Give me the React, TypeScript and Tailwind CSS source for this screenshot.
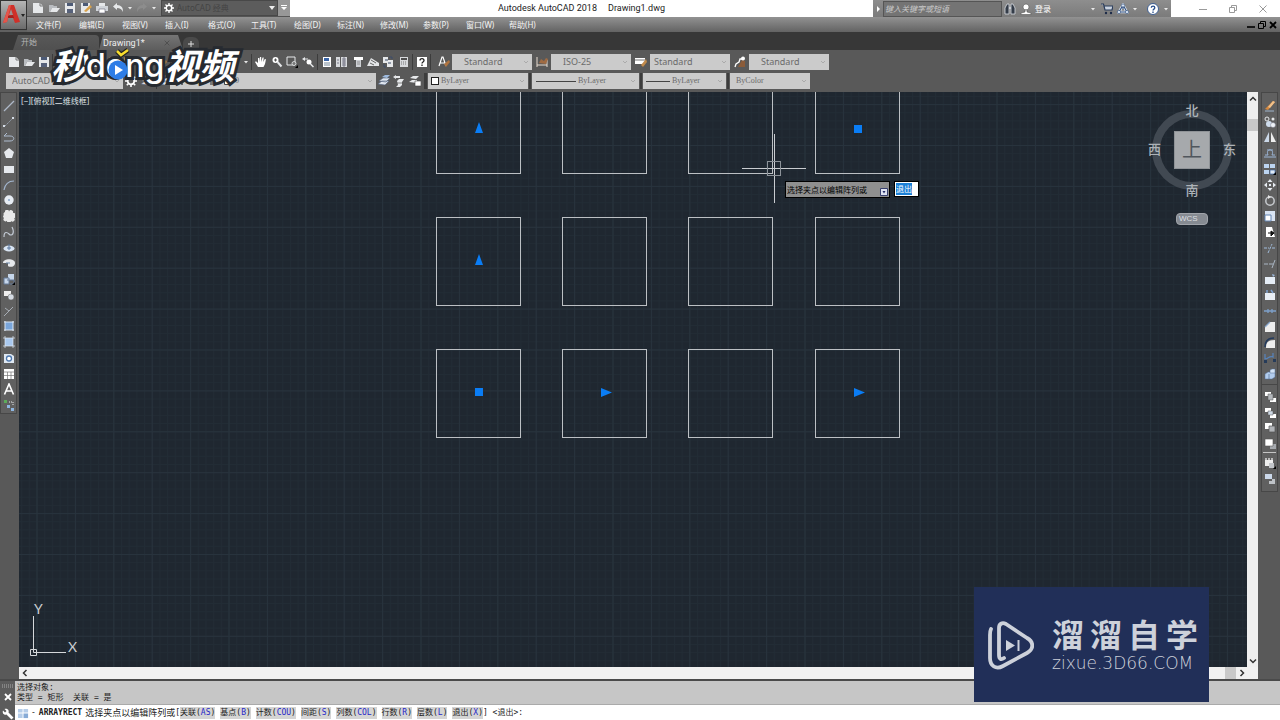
import type { ReactNode } from "react";

const W = "#e6e8ea";
const B = "#a9c8ee";

const glyphs: Record<string, ReactNode> = {
  newFile: <><path d="M1 1h7l3 3v7H1z" fill={W} /><path d="M8 1v3h3" fill="none" stroke="#777" /></>,
  open: <><path d="M1 3h4l1 1h3v2H4l-2 4H1z" fill="#b9bcc0" /><path d="M4 6h8l-3 4H2z" fill={W} /></>,
  save: <><path d="M1 1h10v10H1z" fill={W} /><path d="M3 1h6v3H3z" fill="#4c5a75" /><path d="M3 7h6v4H3z" fill="#56617a" /></>,
  saveAs: <><path d="M1 1h9v10H1z" fill={W} /><path d="M3 1h5v3H3z" fill="#4c5a75" /><path d="M4 9l6-6 2 2-6 5z" fill="#d9a24a" /></>,
  print: <><path d="M3 1h6v3H3z" fill={W} /><path d="M0 4h12v5H0z" fill="#d0d4d9" /><path d="M3 7h6v4H3z" fill="#fff" stroke="#667" strokeWidth=".6" /></>,
  undo: <path d="M5 1L1 4.500L5 8V6c3 0 5 1 5.500 4C12 6 9 3 5 3z" fill={W} />,
  redo: <path d="M7 1l4 3.500L7 8V6C4 6 2 7 1.500 10 0 6 3 3 7 3z" fill="#8d8d8d" />,
  gear: <><circle cx="6" cy="6" r="3.300" fill="none" stroke="#fff" strokeWidth="1.800" /><path d="M6 0v2.500M6 9.500V12M0 6h2.500M9.500 6H12M1.800 1.800l1.700 1.700M8.500 8.500l1.700 1.700M10.200 1.800L8.500 3.500M3.500 8.500l-1.700 1.700" stroke="#fff" strokeWidth="1.600" /></>,
  cut: <path d="M3 1l5 8M9 1L4 9M3 11a1.500 1.500 0 1 0 0-2.900M9 11a1.500 1.500 0 1 1 0-2.900" stroke={W} fill="none" strokeWidth="1.200" />,
  copy: <><path d="M1 1h6v7H1z" fill={W} stroke="#555" strokeWidth=".5" /><path d="M5 4h6v7H5z" fill={W} stroke="#555" strokeWidth=".8" /></>,
  hand: <path d="M3 11L0 6l1-.7L3 7V2h1.200v4L5 1h1.200v5L7.500 1.500h1.200L8.300 6l1.500-3 1.200.3L10 8l-1.500 3z" fill="#fff" />,
  zoomPm: <><circle cx="4.500" cy="4" r="3" fill="#fff" /><path d="M6.500 6l4 4.500" stroke={W} strokeWidth="2" /><path d="M3 4h3M4.500 2.500v3" stroke="#555" /></>,
  zoomWin: <><path d="M1 1h8v8H1z" fill="none" stroke={W} /><circle cx="8" cy="7.500" r="2" fill="#777" stroke={W} strokeWidth=".8" /><path d="M12 9v3H9z" fill="#000" /></>,
  zoomPrev: <><path d="M0 3l3-2v1.500h3v1H3V5z" fill={W} /><circle cx="7" cy="6" r="2.500" fill="#fff" /><path d="M8.500 8l3 3" stroke={W} strokeWidth="1.500" /></>,
  props: <><path d="M2 1h8v10H2z" fill="#fff" /><path d="M3 2h5v3H3z" fill="#3a65a8" /><path d="M3 7h6M3 9h6" stroke="#789" /></>,
  design: <><path d="M0 1h4v10H0zM5 1h6v10H5z" fill="#d8dadd" /><path d="M6 3h4M6 5h4M6 7h4M6 9h4M1 4h2M1 7h2M8 1v10" stroke="#667" strokeWidth=".8" /></>,
  palettes: <><path d="M2 1h9v3H2z" fill="#fff" /><path d="M4 4h5v7H4z" fill="#cdd0d4" /><path d="M5 6h3M5 8h3" stroke="#777" strokeWidth=".7" /></>,
  sheet: <><path d="M0 10l4-8 8 5v3z" fill="#e4e6e8" /><path d="M3 7l4 2M4 4l5 3" stroke="#666" /></>,
  markup: <><path d="M1 1h5v3h5v7H5V7H1z" fill={W} /><path d="M7 1h3v2M2 8v3h2M6 7h3M3 4h3" stroke="#3c4d6b" fill="none" /></>,
  calc: <><path d="M2 1h8v10H2z" fill="#d7d9dc" /><path d="M3 2h6v2H3z" fill="#4d4d4d" /><path d="M3 6h6M3 8h6" stroke="#777" strokeDasharray="1 1" /></>,
  help: <><path d="M1 1h10v10H1z" fill="#fff" /><path d="M4 4.500c0-2.500 4-2.500 4 0 0 1.500-2 1.500-2 3M6 8.500V10" stroke="#222" strokeWidth="1.300" fill="none" /></>,
  textStyle: <><path d="M1 10L4 1h1l3 9M2.500 7h4" stroke="#fff" fill="none" strokeWidth="1.200" /><path d="M6 8l5-4 1 2-4 5z" fill="#b07440" /></>,
  dimStyle: <><path d="M1 1v10M11 4v7M1 9h10" stroke="#e8dcd0" /><path d="M3 7l2-4 3 2 2-3 2 1-2 5z" fill="#a06b42" /></>,
  tableStyle: <><path d="M0 2h10v6H0z" fill="#fff" /><path d="M0 4h10" stroke="#777" /><path d="M6 9l5-6 1 3-4 5z" fill="#c18a4b" /></>,
  leaderStyle: <><path d="M4 11l4-7 3 1v6z" fill="#8b5c3a" /><path d="M1 11l1-3 3-2 1-3h2" stroke="#fff" fill="none" strokeWidth="1.300" /><circle cx="9" cy="2.500" r="2" fill="#fff" /></>,
  layers: <><path d="M0 9l4-3h7l-4 4zM1 6l4-3h7l-4 4z" fill="#dfe5ee" stroke="#51627d" strokeWidth=".6" /><path d="M4 2l3-2h5l-3 3z" fill="#9db9dd" /></>,
  layerPrev: <><path d="M0 2l3-2v1h4v2H3v1z" fill={W} /><path d="M4 6l2-2h5l-2 3v3l-2 2H3l2-2z" fill={W} /><path d="M4 8h5" stroke="#555" strokeWidth=".7" /></>,
  layerState: <><path d="M1 3l3-2h6L7 4zM0 7l3-2h5v3z" fill={W} /><path d="M6 6h6v5H6z" fill="#fff" stroke="#444" strokeWidth=".6" /></>,
  line: <path d="M1 11L11 1" stroke="#aeb9c9" strokeWidth="1.200" />,
  xline: <><path d="M2 10L10 2" stroke="#99a3b0" strokeDasharray="2 1" /><path d="M0 9h2v2H0zM9 1h2v2H9z" fill="#d5dbe4" /></>,
  pline: <path d="M1 10h6c5 0 5-5 0-5H1l3-3" stroke="#aebccf" fill="none" />,
  polygon: <path d="M6 1l5 4-2 6H3L1 5z" fill="#e6e9ed" />,
  rectangle: <path d="M1 3h10v7H1z" fill="#e6e9ed" />,
  arc: <path d="M1 11C2 5 5 2 11 2" stroke="#a3b6cf" fill="none" strokeWidth="1.200" />,
  circle: <><circle cx="6" cy="6" r="4.700" fill="#e8edf4" /><circle cx="6" cy="6" r="1" fill="#8aa6ca" /></>,
  cloud: <path d="M2 2a2 2 0 0 1 4-.5A2 2 0 0 1 10 3a2 2 0 0 1 1 5 2 2 0 0 1-3 3 2 2 0 0 1-4-.3A2 2 0 0 1 1 8a2 2 0 0 1-.2-3A2 2 0 0 1 2 2z" fill="#e9e9e9" />,
  spline: <path d="M1 11c0-7 4-4 5-3 3 3 6-1 3-7" stroke="#c4cbd5" fill="none" strokeWidth="1.200" />,
  ellipse: <><ellipse cx="6" cy="6.500" rx="5.500" ry="3" fill="#d9e5f3" /><path d="M6 2v6M4 6h4" stroke="#58779f" /></>,
  ellipseArc: <><path d="M0 6c0-5 12-5 12 0s-7 4-7 3V6z" fill="#e7e9ec" /><path d="M3 6h4" stroke="#6885a8" /></>,
  insert: <><path d="M1 5h5v6H1zM5 1h6v6H5z" fill="#c6d6ea" /><path d="M1 5h5v6H1zM4 7h7v4H7" fill="none" stroke="#647b99" /><path d="M12 9v3H9z" fill="#000" /></>,
  block: <><path d="M1 2h7v5H1z" fill="#eee" /><circle cx="8" cy="8" r="3" fill="#d4dae2" stroke="#666" strokeWidth=".5" /></>,
  point: <path d="M1 11L10 2M2 3l4 3" stroke="#a7adb5" />,
  region: <><path d="M2 2h8v8H2z" fill={B} /><path d="M0 2h12M0 10h12M2 0v12M10 0v12" stroke="#dfe9f5" strokeWidth=".7" /></>,
  hatch: <><path d="M2 2h8v8H2z" fill="#79a5da" /><path d="M1 2h10M1 10h10M2 1v10M10 1v10" stroke="#dbe6f3" /></>,
  wipe: <><path d="M1 2h7l3 2v7H1z" fill="#dfe8f2" /><circle cx="6" cy="6.500" r="2.500" fill="#fff" stroke="#4e78ae" strokeWidth="1.300" /></>,
  table: <><path d="M1 1h10v10H1z" fill="#fff" /><path d="M1 4h10M1 7.500h10M4.500 4v7M8 4v7" stroke="#777" strokeWidth=".7" /></>,
  mtext: <path d="M1.500 11.500L6 1l4.500 10.500M3 8h6" stroke="#fff" fill="none" strokeWidth="1.600" />,
  points: <><path d="M1 1h3v3H1z" fill="#5cab5a" /><path d="M6 3h4v3" stroke={W} fill="none" strokeDasharray="1 1" /><path d="M4 6h3v3H4zM8 9h3v3H8z" fill="#8eb6e2" /></>,
  erase: <><path d="M1 9l8-8 2 1-7 8z" fill="#d6883e" /><path d="M9 1l2 1-5 6-2-1z" fill="#f1c18a" /><path d="M1 11h9" stroke="#9db3cb" /></>,
  copyObj: <><circle cx="3" cy="3" r="2" fill="none" stroke={W} /><circle cx="9" cy="3" r="1.500" fill={W} /><circle cx="5" cy="8" r="3" fill="#cfdcec" /><circle cx="9" cy="9" r="2.500" fill="#eef2f7" stroke="#667" strokeWidth=".4" /></>,
  mirror: <><path d="M5 1v10H0z" fill="#cbd8e8" /><path d="M7 1v10h5z" fill="#eee" /></>,
  offset: <path d="M0 10h12M1 8h3c-3-7 7-7 4 0h3M3 3h6" stroke="#9bb5d6" fill="none" />,
  array: <><path d="M0 1h5v4H0zM6 1h5v4H6zM0 7h5v4H0z" fill="#bcd4f0" /><path d="M6 7h5v4H6z" fill="#dfeaf6" stroke="#3b66a0" strokeWidth=".7" /><path d="M12 9v3H9z" fill="#000" /></>,
  move: <path d="M6 0l2.500 3h-5zM6 12l2.500-3h-5zM0 6l3-2.500v5zM12 6L9 3.500v5zM5 5h2v2H5z" fill="#e6ebf1" />,
  rotate: <><circle cx="6" cy="6" r="4.200" fill="none" stroke="#c6c9cd" strokeWidth="1.500" /><path d="M4 0l3 2-3 2z" fill="#e5e5e5" /></>,
  scale: <><path d="M1 1h10v10H1z" fill="#d8e3f2" /><path d="M1 5h6v6H1z" fill="#fff" stroke="#6384b2" /></>,
  stretch: <><path d="M2 1h6l3 10H2z" fill="#fff" /><path d="M4 7h4M7 5l3 2-3 3z" stroke="#111" fill="#111" /></>,
  trim: <path d="M0 6h5M8 6h4M4 11l4-9" stroke="#9fbad9" strokeDasharray="3 1" />,
  extend: <path d="M0 6h4M5 6h4M8 10l3-8" stroke="#a9b5c3" />,
  breakAt: <><path d="M1 4h10v7H1z" fill="#e5edf6" /><path d="M8 1l3 1-2 2z" fill="#9bb8dc" /></>,
  breakObj: <><path d="M1 4h10v7H1z" fill="#e8eef5" /><path d="M3 1v3M7 1l2 3" stroke="#7fa3d0" strokeWidth="1.500" /></>,
  join: <path d="M0 6h12M4 4v4M8 4v4" stroke="#7da0ca" strokeWidth="1.300" />,
  chamfer: <><path d="M1 11V6l5-5h5v10z" fill="#eee" /><path d="M1 6l5-5" stroke="#8aa9cf" strokeWidth="1.300" /></>,
  fillet: <><path d="M2 11c0-6 2-8 9-8v8z" fill="#eee" /><path d="M1 10C1 4 4 1 10 1" stroke="#233a5c" fill="none" strokeWidth="1.500" /></>,
  blend: <><path d="M1 2v5c4 0 4-4 8-2V1" stroke="#5784bd" fill="none" strokeWidth="1.200" /><path d="M0 8h3v3H0zM9 7h3v3H9z" fill="#263b59" /></>,
  explode: <><path d="M1 6l3-2h7v5l-3 2H1z" fill="#b2cced" stroke="#526f95" strokeWidth=".5" /><path d="M6 2l2-1h3v4H6z" fill="#d2e2f5" stroke="#526f95" strokeWidth=".5" /><path d="M5 6v5" stroke="#526f95" strokeWidth=".7" /></>,
  order1: <><path d="M1 1h6v4H1zM6 7h6v4H6z" fill="#fff" /><path d="M4 3h5v6H4z" fill="#b3b6ba" stroke="#555" strokeWidth=".5" /></>,
  order2: <><path d="M1 1h6v4H1zM6 7h6v4H6z" fill="#fff" /><path d="M4 4h5v4H4z" fill="#cdd7e3" stroke="#555" strokeWidth=".5" /></>,
  order3: <><path d="M1 1h7v6H1z" fill="#fff" /><path d="M5 4h6v6H5z" fill="#b0b3b7" stroke="#555" strokeWidth=".7" /></>,
  order4: <><path d="M6 6h6v5H6z" fill="#a5a9ae" /><path d="M1 1h8v7H1z" fill="#fff" stroke="#555" strokeWidth=".6" /></>,
  order5: <><path d="M1 3h8v6H1z" fill="#eee" /><path d="M2 1v3M5 1v3M8 1v3" stroke="#eee" strokeWidth="1.300" /><path d="M5 6h5v5H5z" fill="#c2c5c9" /><path d="M12 9v3H9z" fill="#000" /></>,
  order6: <><path d="M1 1h7v5H1z" fill="#cbd8ea" /><path d="M8 6h3v5H5V8h3z" fill="#bec2c7" /></>,
  binoculars: <><path d="M1 11V5l2-4h2v10zM7 11V1h2l2 4v6z" fill="#343c48" stroke="#d8dce2" strokeWidth=".8" /><path d="M5 5h2" stroke="#d8dce2" strokeWidth="1.500" /></>,
  user: <><circle cx="6" cy="4" r="3" fill="#fff" stroke="#555" strokeWidth=".6" /><path d="M5 7h2v2l4 1v1.500H1V10l4-1z" fill="#fff" stroke="#555" strokeWidth=".6" /></>,
  cart: <><path d="M0 1h2.500l1.500 6h7l1-4H3" fill="#c9d2df" stroke="#2a3c5b" strokeWidth="1.200" /><circle cx="5" cy="10" r="1.200" fill="#1d2c48" /><circle cx="10" cy="10" r="1.200" fill="#1d2c48" /></>,
  a360: <><path d="M6 2L2 9h8zM6 2v4" fill="none" stroke="#e3ebf6" strokeWidth="2.600" /><path d="M6 2L2 9h8zM6 2v4" fill="none" stroke="#33507e" strokeWidth="1.100" /><circle cx="6" cy="2.500" r="1.600" fill="#dbe6f5" stroke="#33507e" strokeWidth=".6" /><circle cx="2" cy="9" r="1.600" fill="#dbe6f5" stroke="#33507e" strokeWidth=".6" /><circle cx="10" cy="9" r="1.600" fill="#dbe6f5" stroke="#33507e" strokeWidth=".6" /></>,
  round: <><circle cx="6" cy="6" r="5.500" fill="#fff" stroke="#3e5f93" /><path d="M4.300 4.800c0-2.300 3.500-2.300 3.500 0C7.800 6.200 6 6 6 7.500M6 8.500V10" stroke="#264d8c" strokeWidth="1.300" fill="none" /></>,
  min: <path d="M2 6.500h8" stroke="currentColor" />,
  restore: <path d="M2.500 4.500h5v5h-5zM4.500 4.500v-2h5v5h-2" fill="none" stroke="currentColor" />,
  close: <path d="M2.500 2.500l7 7M9.500 2.500l-7 7" stroke="currentColor" fill="none" />,
  cross: <path d="M3 3l6 6M9 3L3 9" stroke="currentColor" strokeWidth="1.800" fill="none" />,
  minBold: <path d="M2 8h8" stroke="currentColor" strokeWidth="1.600" />,
  wrench: <path d="M1 2.500L3 4.500 4.500 3l-2-2C5 0 7.500 2 6.500 4.500l5 5-2 2-5-5C2 7.500 0 5 1 2.500z" fill="#fff" />,
  up: <path d="M3 7.500l3-3 3 3" stroke="#333" strokeWidth="1.500" fill="none" />,
  down: <path d="M3 4.500l3 3 3-3" stroke="#333" strokeWidth="1.500" fill="none" />,
  left: <path d="M7.500 3l-3 3 3 3" stroke="#333" strokeWidth="1.500" fill="none" />,
  right: <path d="M4.500 3l3 3-3 3" stroke="#333" strokeWidth="1.500" fill="none" />,
  chevron: <path d="M4 5l2 2 2-2" stroke="#aaa" fill="none" />,
  caret: <path d="M4 5h4L6 7.500z" fill="#e8e8e8" />,
  arrayCmd: <><path d="M0 1h5v4H0zM6 1h5v4H6zM0 6h5v5H0z" fill="#b5cde9" /><path d="M6 6h5v5H6z" fill="#87abd6" /></>,
};

function Icon({ name, className = "size-3" }: { name: string; className?: string }) {
  return (
    <svg viewBox="0 0 12 12" className={`${className} shrink-0`} aria-hidden="true">
      {glyphs[name]}
    </svg>
  );
}

function Tool({ name, label, className = "w-4" }: { name: string; label: string; className?: string }) {
  return (
    <button type="button" aria-label={label} className={`flex shrink-0 items-center justify-center ${className}`}>
      <Icon name={name} />
    </button>
  );
}

function Combo({ label, value, className, before }: { label: string; value: string; className: string; before?: ReactNode }) {
  return (
    <label className={`flex h-4 shrink-0 items-center bg-[#cbcbcb] text-[#6a6a6a] ${className}`}>
      {before}
      <select aria-label={label} className="min-w-0 flex-1 appearance-none bg-transparent leading-4 outline-none">
        <option>{value}</option>
      </select>
      <Icon name="chevron" />
    </label>
  );
}

const Sep = () => <span className="mx-px h-4 w-px shrink-0 bg-[#3c3c3c]" />;

const menus = ["文件(F)", "编辑(E)", "视图(V)", "插入(I)", "格式(O)", "工具(T)", "绘图(D)", "标注(N)", "修改(M)", "参数(P)", "窗口(W)", "帮助(H)"];

function Header() {
  return (
    <header className="flex h-8 shrink-0 bg-[#606060]">
      <button type="button" aria-label="应用程序" className="flex h-[30px] w-[27px] shrink-0 items-center border border-[#333] bg-linear-to-b from-[#b5b5b5] to-[#6b6b6b]">
        <svg viewBox="0 0 20 24" className="h-6 w-5" aria-hidden="true">
          <path d="M2 20L8 2h5l6 17-5 1-2-5H7l-1 4z" fill="#cf3029" />
          <path d="M8 12l2-6 2 6z" fill="#9d9090" />
          <path d="M2 20L8 2h2L6 19z" fill="#e4554b" />
          <path d="M7 13l5-1 1 3H7z" fill="#a3211d" />
        </svg>
        <svg viewBox="0 0 4 3" className="h-[3px] w-1" aria-hidden="true"><path d="M0 0h4L2 3z" fill="#222" /></svg>
      </button>
      <div className="flex min-w-0 flex-1 flex-col">
        <div className="flex h-[17px] bg-white">
          <div className="flex w-[263px] shrink-0 items-stretch border-b border-[#555] bg-linear-to-b from-[#8a8a8a] to-[#757575] pl-[3px]">
            <Tool name="newFile" label="新建" />
            <Tool name="open" label="打开" />
            <Tool name="save" label="保存" />
            <Tool name="saveAs" label="另存为" />
            <Tool name="print" label="打印" />
            <Tool name="undo" label="放弃" />
            <Tool name="caret" label="放弃列表" className="w-2" />
            <Tool name="redo" label="重做" />
            <Tool name="caret" label="重做列表" className="w-2" />
            <label className="ml-[3px] flex flex-1 items-center gap-[3px] border border-[#484848] bg-[#5c5c5c] px-[2px]">
              <Icon name="gear" className="size-[10px]" />
              <select aria-label="工作空间" className="min-w-0 flex-1 appearance-none bg-transparent text-[8px] text-[#444] outline-none">
                <option>AutoCAD 经典</option>
              </select>
              <svg viewBox="0 0 6 4" className="h-1 w-[6px]" aria-hidden="true"><path d="M0 0h6L3 4z" fill="#eee" /></svg>
            </label>
            <button type="button" aria-label="自定义" className="flex w-3 items-center justify-center bg-[#989898]">
              <svg viewBox="0 0 6 6" className="size-[6px]" aria-hidden="true"><path d="M0 0h6v1H0zM0 2h6L3 5z" fill="#fff" /></svg>
            </button>
          </div>
          <h1 className="flex flex-1 items-center justify-center gap-[11px] font-['Roboto',sans-serif] text-[9px] whitespace-nowrap text-[#222]">
            <span>Autodesk AutoCAD 2018</span>
            <span>Drawing1.dwg</span>
          </h1>
          <div className="flex w-[298px] shrink-0 items-center bg-linear-to-b from-[#8e8e8e] to-[#7b7b7b]">
            <button type="button" aria-label="展开" className="flex w-[10px] items-center justify-center">
              <svg viewBox="0 0 3 6" className="h-[6px] w-[3px]" aria-hidden="true"><path d="M0 0v6l3-3z" fill="#fff" /></svg>
            </button>
            <input aria-label="搜索" placeholder="键入关键字或短语" className="h-4 w-[119px] border border-[#555] bg-[#747474] px-[1px] text-[8px] italic outline-none placeholder:text-[#c9c9c9]" />
            <Tool name="binoculars" label="搜索帮助" />
            <button type="button" className="ml-[2px] flex items-center gap-[3px] text-[8px] text-white">
              <Icon name="user" />
              登录
            </button>
            <span className="flex-1" />
            <Tool name="caret" label="登录选项" className="w-3" />
            <Tool name="cart" label="应用商店" />
            <Tool name="a360" label="A360" />
            <Tool name="caret" label="A360 选项" className="w-2" />
            <Tool name="round" label="帮助" className="ml-[6px] w-4" />
            <Tool name="caret" label="帮助选项" className="w-[10px]" />
          </div>
          <div className="flex w-[109px] shrink-0 items-center justify-between pr-[11px] pl-[26px] text-[#9a9a9a]">
            <Tool name="min" label="最小化" className="w-3" />
            <Tool name="restore" label="还原" className="w-3" />
            <Tool name="close" label="关闭" className="w-3" />
          </div>
        </div>
        <nav className="flex h-[15px] items-center gap-4 bg-linear-to-b from-[#929292] to-[#636363] pr-px pl-[9px] text-[8px] text-[#f4f4f4]">
          {menus.map((m) => (
            <button key={m} type="button" className="w-[27px] shrink-0 text-left leading-3 whitespace-nowrap">{m}</button>
          ))}
          <span className="flex-1" />
          <span className="flex text-black">
            <Tool name="minBold" label="最小化图形" className="w-3" />
            <Tool name="restore" label="还原图形" className="w-[10px]" />
            <Tool name="cross" label="关闭图形" className="w-3" />
          </span>
        </nav>
      </div>
    </header>
  );
}

function FileTabs() {
  return (
    <div className="flex h-[18px] shrink-0 items-end bg-[#373737] pl-[13px] font-['Roboto','Noto_Sans_CJK_SC',sans-serif] text-[9px]">
      <button type="button" className="h-[15px] w-[86px] rounded-t-sm bg-linear-to-b from-[#585858] to-[#505050] pl-2 text-left text-[8px] text-[#b5b5b5] [clip-path:polygon(5px_0,100%_0,100%_100%,0_100%)]">
        开始
      </button>
      <div className="flex h-[15px] w-[84px] items-center justify-between rounded-t-sm bg-linear-to-b from-[#757575] to-[#5d5d5d] pr-3 pl-1 text-[#eee] [clip-path:polygon(4px_0,calc(100%-5px)_0,100%_100%,0_100%)]">
        <button type="button" className="leading-3">Drawing1*</button>
        <button type="button" aria-label="关闭选项卡" className="text-[#444]"><Icon name="close" className="size-2" /></button>
      </div>
      <button type="button" aria-label="新图形" className="flex h-[13px] w-4 items-center justify-center rounded-t-md bg-[#4a4a4a]">
        <svg viewBox="0 0 6 6" className="size-[6px]" aria-hidden="true"><path d="M3 0v6M0 3h6" stroke="#ddd" /></svg>
      </button>
    </div>
  );
}

function Toolbars() {
  return (
    <div className="flex shrink-0 flex-col gap-[3px] bg-[#595959] pt-1 pb-[3px] font-['Noto_Sans','Noto_Sans_CJK_SC',sans-serif] text-[9px]">
      <div className="flex h-4 pl-[6px]">
        <div className="flex w-[247px] shrink-0">
          <Tool name="newFile" label="新建文件" className="w-[15px]" />
          <Tool name="open" label="打开文件" className="w-[15px]" />
          <Tool name="save" label="保存文件" className="w-[15px]" />
          <Sep />
          <Tool name="print" label="打印图形" />
          <Tool name="sheet" label="打印预览" />
          <Tool name="markup" label="发布" />
          <Sep />
          <Tool name="cut" label="剪切" />
          <Tool name="copy" label="复制" />
          <Tool name="newFile" label="粘贴" />
          <Tool name="textStyle" label="特性匹配" />
          <Sep />
          <Tool name="undo" label="撤销" />
          <Tool name="caret" label="撤销列表" className="w-2" />
          <Tool name="redo" label="恢复" />
          <span className="flex-1" />
          <Tool name="caret" label="恢复列表" className="w-2" />
          <Sep />
        </div>
        <Tool name="hand" label="平移" />
        <Tool name="zoomPm" label="缩放" className="w-[15px]" />
        <Tool name="zoomWin" label="窗口缩放" />
        <Tool name="zoomPrev" label="上一个缩放" />
        <Sep />
        <Tool name="props" label="特性" className="w-[15px]" />
        <Tool name="design" label="设计中心" />
        <Tool name="palettes" label="工具选项板" className="w-[15px]" />
        <Tool name="sheet" label="图纸集" className="w-[15px]" />
        <Tool name="markup" label="标记集" />
        <Tool name="calc" label="计算器" className="w-[15px]" />
        <Sep />
        <Tool name="help" label="帮助主题" className="w-[15px]" />
        <Sep />
        <Tool name="textStyle" label="文字样式" className="ml-[3px] w-[17px]" />
        <Combo label="文字样式" value="Standard" className="w-20 pl-3" />
        <Tool name="dimStyle" label="标注样式" className="w-[19px]" />
        <Combo label="标注样式" value="ISO-25" className="w-20 pl-3" />
        <Tool name="tableStyle" label="表格样式" className="w-[19px]" />
        <Combo label="表格样式" value="Standard" className="w-20 pl-1" />
        <Tool name="leaderStyle" label="多重引线样式" className="w-[19px]" />
        <Combo label="多重引线样式" value="Standard" className="w-20 pl-3" />
      </div>
      <div className="flex h-4 pl-[6px] font-['Liberation_Serif','Noto_Sans_CJK_SC',serif] text-[8px]">
        <Combo label="工作空间列表" value="AutoCAD 经典" className="w-[117px] pl-[6px] font-['Noto_Sans','Noto_Sans_CJK_SC',sans-serif] text-[9px]" />
        <Tool name="gear" label="工作空间设置" />
        <Tool name="layers" label="我的空间" />
        <Sep />
        <Tool name="layers" label="图层特性" className="w-3" />
        <Combo
          label="图层"
          value="0"
          className="w-[206px] pl-1"
          before={
            <svg viewBox="0 0 61 10" className="h-[10px] w-[61px]" aria-hidden="true">
              <circle cx="8" cy="4" r="3" fill="#d8c667" />
              <path d="M7 7h2v2H7z" fill="#666" />
              <circle cx="24" cy="5" r="3" fill="#d3b94c" />
              <path d="M36 5h7v4h-7z" fill="#777" />
              <path d="M50.500 2.500h6v6h-6z" fill="#fff" stroke="#444" />
            </svg>
          }
        />
        <Tool name="layers" label="将对象的图层置为当前" className="w-[15px]" />
        <Tool name="layerPrev" label="上一个图层" />
        <Tool name="layerState" label="图层状态" />
        <span className="mx-[1px] w-[3px] bg-[#3c3c3c]" />
        <Combo label="颜色" value="ByLayer" className="w-[100px] gap-[2px] pl-[3px]" before={<span className="size-2 border border-[#222] bg-white" />} />
        <span className="mx-[1px] w-[2px] bg-[#3c3c3c]" />
        <Combo label="线型" value="ByLayer" className="w-[107px] gap-[2px] pl-1" before={<span className="h-px w-10 bg-[#444]" />} />
        <span className="mx-[1px] w-[2px] bg-[#3c3c3c]" />
        <Combo label="线宽" value="ByLayer" className="w-[83px] gap-[2px] pl-[3px]" before={<span className="h-px w-6 bg-[#444]" />} />
        <span className="mx-[1px] w-[2px] bg-[#3c3c3c]" />
        <Combo label="打印样式" value="ByColor" className="w-20 pl-[6px]" />
      </div>
    </div>
  );
}

const drawTools = [
  ["line", "直线"], ["xline", "构造线"], ["pline", "多段线"], ["polygon", "多边形"], ["rectangle", "矩形"],
  ["arc", "圆弧"], ["circle", "圆"], ["cloud", "修订云线"], ["spline", "样条曲线"], ["ellipse", "椭圆"],
  ["ellipseArc", "椭圆弧"], ["insert", "插入块"], ["block", "创建块"], ["point", "点"], ["hatch", "图案填充"],
  ["region", "渐变色"], ["wipe", "面域"], ["table", "表格"], ["mtext", "多行文字"], ["points", "添加选定对象"],
];
const modifyTools = [
  ["erase", "删除"], ["copyObj", "复制对象"], ["mirror", "镜像"], ["offset", "偏移"], ["array", "阵列"], ["move", "移动"],
  ["rotate", "旋转"], ["scale", "缩放对象"], ["stretch", "拉伸"], ["trim", "修剪"], ["extend", "延伸"], ["breakAt", "打断于点"],
  ["breakObj", "打断"], ["join", "合并"], ["chamfer", "倒角"], ["fillet", "圆角"], ["blend", "光顺曲线"], ["explode", "分解"],
];
const orderTools = [["order1", "前置"], ["order2", "后置"], ["order3", "置于对象之上"], ["order4", "置于对象之下"]];
const orderMore = [["order5", "注释前置"], ["order6", "图案填充后置"]];

const columns = [417, 543, 669, 796];
const rows = [-7, 125, 257];

function Canvas() {
  return (
    <main className="relative min-w-0 flex-1 overflow-hidden bg-[#1f2730]">
      <svg className="absolute inset-0 size-full" aria-hidden="true">
        <defs>
          <pattern id="minor" width="7.68" height="8.18" x="17.500" y="53" patternUnits="userSpaceOnUse">
            <path d="M.5 0v8.180M0 .5h7.680" stroke="#222c35" />
          </pattern>
          <pattern id="major" width="38.4" height="40.9" x="17.500" y="53" patternUnits="userSpaceOnUse">
            <path d="M.5 0v40.900M0 .5h38.400" stroke="#28333d" />
          </pattern>
        </defs>
        <rect width="100%" height="100%" fill="url(#minor)" />
        <rect width="100%" height="100%" fill="url(#major)" />
        <g fill="none" stroke="#bcc0c4">
          {rows.map((y) => columns.map((x) => <rect key={`${x}-${y}`} x={x + 0.5} y={y + 0.5} width="84" height="88" />))}
        </g>
        <g fill="#0a7df5">
          <path d="M460 30l4 11h-8zM460 162l4 11h-8zM582 296l11 4.500-11 4.500zM835 296l11 4.500-11 4.500z" />
          <path d="M456 296h8v8h-8zM835 33h8v8h-8z" />
        </g>
        <g fill="none" stroke="#c9ccd0">
          <path d="M723 76.500h64M755.500 42v69" />
          <rect x="748.500" y="69.500" width="13" height="14" stroke="#8d9399" />
        </g>
      </svg>
      <button type="button" className="absolute top-[3px] left-[2px] text-[8px] text-[#dfe2e5]">[−][俯视][二维线框]</button>

      <div className="absolute top-[89px] left-[766px] flex items-start gap-1 text-[8px]">
        <div className="flex h-[17px] w-[105px] items-center justify-between border border-black bg-[#8f8f8f] pr-[1px] pl-[1px] whitespace-nowrap text-black">
          选择夹点以编辑阵列或
          <svg viewBox="0 0 8 8" className="mt-1 size-2" aria-hidden="true">
            <path d="M.5.5h7v7h-7z" fill="#dfe3f2" stroke="#38406e" />
            <path d="M2.500 3h3L4 5.500z" fill="#222c66" />
          </svg>
        </div>
        <div className="flex h-4 w-[25px] items-center border border-black bg-white pl-[1px]">
          <span className="bg-[#1b7fd6] leading-3 text-white">退出</span>
        </div>
      </div>

      <div className="absolute top-2 right-[10px] flex flex-col items-center font-['Liberation_Serif','Noto_Sans_CJK_SC',serif] text-[13px] leading-3 font-medium text-[#aeb3b8]">
        <div className="relative grid h-[100px] w-[90px] place-items-center">
          <svg viewBox="0 0 90 100" className="absolute inset-0" aria-hidden="true">
            <circle cx="45" cy="50" r="36" fill="none" stroke="#414952" strokeWidth="8" />
          </svg>
          <button type="button" className="absolute top-[5px]">北</button>
          <button type="button" className="absolute left-px">西</button>
          <button type="button" className="absolute right-px">东</button>
          <button type="button" className="absolute bottom-[3px]">南</button>
          <button type="button" className="relative h-9 w-[34px] bg-[#a6a9ac] text-xl leading-9 font-normal text-[#50565d] ring-1 ring-[#8f9397]">上</button>
        </div>
        <button type="button" className="mt-[13px] h-3 w-8 rounded-sm border border-[#a0a4aa] bg-[#868b92] pl-[2px] text-left font-['Liberation_Sans',sans-serif] text-[8px] leading-[10px] font-normal text-[#dcdfe3]">WCS</button>
      </div>

      <svg viewBox="0 0 50 56" className="absolute bottom-[2px] left-[10px] h-14 w-[50px]" aria-label="UCS">
        <g fill="none" stroke="#d5d8db">
          <path d="M4.500 7v33M8 43.500h29M1.500 40.500h6v6h-6zM4.500 40v3.500H8" />
        </g>
      </svg>
      <span className="absolute bottom-[51px] left-[15px] font-['Lato',sans-serif] text-[14px] leading-[14px] text-[#c9cdd1]">Y</span>
      <span className="absolute bottom-[13px] left-[49px] font-['Lato',sans-serif] text-[14px] leading-[14px] text-[#c9cdd1]">X</span>
    </main>
  );
}

function ToolRail({ tools }: { tools: string[][] }) {
  return (
    <>
      {tools.map(([name, label]) => (
        <Tool key={name} name={name} label={label} className="w-full flex-1" />
      ))}
    </>
  );
}

function Workspace() {
  return (
    <div className="flex min-h-0 flex-1 bg-[#595959]">
      <aside className="flex w-[19px] shrink-0 items-start">
        <div className="flex h-[322px] w-[17px] flex-col border border-[#474747] bg-[#606060] pt-[5px]">
          <ToolRail tools={drawTools} />
        </div>
      </aside>
      <div className="flex min-w-0 flex-1 flex-col">
        <div className="flex min-h-0 flex-1">
          <Canvas />
          <div className="flex w-[11px] shrink-0 flex-col items-center bg-[#efefef]">
            <Tool name="up" label="向上滚动" className="h-[13px] w-[11px]" />
            <span className="mt-[14px] h-3 w-full bg-[#c9c9c9]" />
            <span className="flex-1" />
            <Tool name="down" label="向下滚动" className="h-3 w-[11px]" />
          </div>
        </div>
        <div className="flex h-3 shrink-0 items-center bg-[#f1f1f1]">
          <Tool name="left" label="向左滚动" className="w-[11px]" />
          <span className="flex-1" />
          <span className="h-full w-[11px] bg-[#c9c9c9]" />
          <Tool name="right" label="向右滚动" className="mr-[10px] w-3" />
        </div>
      </div>
      <aside className="flex w-[22px] shrink-0 items-start pl-[3px]">
        <div className="flex w-[17px] flex-col border border-[#474747] bg-[#606060] pt-[5px] pb-1">
          <div className="flex h-[284px] flex-col"><ToolRail tools={modifyTools} /></div>
          <div className="mt-[2px] flex h-[68px] flex-col border-t border-[#474747] pt-1"><ToolRail tools={orderTools} /></div>
          <span className="mx-[1px] mb-[2px] h-px bg-[#c5c5c5]" />
          <div className="flex h-8 flex-col"><ToolRail tools={orderMore} /></div>
        </div>
      </aside>
    </div>
  );
}

const options = [["关联", "AS"], ["基点", "B"], ["计数", "COU"], ["间距", "S"], ["列数", "COL"], ["行数", "R"], ["层数", "L"], ["退出", "X"]];

function CommandLine() {
  return (
    <footer className="flex h-[41px] shrink-0 border-t-2 border-[#4a4a4a] bg-[#5c5c5c] font-['DejaVu_Sans_Mono','Noto_Sans_CJK_SC',monospace] text-[8px] text-[#222]">
      <div className="flex w-[15px] shrink-0 flex-col items-center pt-[3px] text-white">
        <svg viewBox="0 0 11 4" className="h-1 w-[11px]" aria-hidden="true"><path d="M0 1h11M0 3h11" stroke="#aaa" strokeDasharray="1 1" /></svg>
        <Tool name="cross" label="关闭命令行" className="mt-[3px] h-3 w-3" />
        <Tool name="wrench" label="自定义命令行" className="mt-[5px] h-3 w-3" />
      </div>
      <div className="flex min-w-0 flex-1 flex-col">
        <div className="h-[25px] border-b border-[#aaa] bg-[#c6c6c6] pt-[2px] pl-[2px] leading-[10px] whitespace-pre">
          <p>选择对象:</p>
          <p>类型 = 矩形  关联 = 是</p>
        </div>
        <div className="flex flex-1 items-center bg-white pt-[2px] pl-[3px] whitespace-nowrap">
          <Icon name="arrayCmd" className="size-[11px]" />
          <span className="mr-[3px] ml-[2px]">-</span>
          <b>ARRAYRECT</b>
          <span className="ml-[3px] text-[9px]">选择夹点以编辑阵列或</span>
          <span>[</span>
          <div className="flex gap-[5px]">
            {options.map(([text, key]) => (
              <button key={key} type="button" className="bg-[#d4d4d4] leading-3">
                {text}(<span className="text-[#2626c8]">{key}</span>)
              </button>
            ))}
          </div>
          <label htmlFor="command" className="whitespace-pre">] &lt;退出&gt;:</label>
          <input id="command" className="min-w-0 flex-1 bg-transparent outline-none" />
        </div>
      </div>
    </footer>
  );
}

function VideoMark() {
  return (
    <div className="pointer-events-none absolute top-[51px] left-[51px] flex items-center font-['Inter','Noto_Sans_CJK_SC',sans-serif] text-[35px] leading-[30px] font-bold whitespace-nowrap text-white [-webkit-text-stroke:6px_#262a30] [paint-order:stroke_fill]">
      <span className="italic">秒</span>
      <span className="text-[32px] font-medium">dong</span>
      <span className="italic">视频</span>
      <svg viewBox="0 0 24 36" className="absolute -top-[6px] left-[56px] h-9 w-6" aria-hidden="true">
        <circle cx="11" cy="25" r="9.500" fill="#2e7de6" />
        <path d="M8 20v10l8-5z" fill="#fff" />
        <path d="M10 6l4 4 7-5" fill="none" stroke="#222" strokeWidth="5" />
        <path d="M10 6l4 4 7-5" fill="none" stroke="#f7dc2e" strokeWidth="2.500" />
      </svg>
    </div>
  );
}

function StudyMark() {
  return (
    <div className="absolute right-[71px] bottom-[18px] flex h-[115px] w-[235px] items-center gap-[18px] bg-[#212f58] pl-[14px] text-[#cdd1da]">
      <svg viewBox="0 0 46 50" className="h-[50px] w-[46px] shrink-0" aria-hidden="true">
        <g fill="none" stroke="currentColor" strokeLinecap="round" strokeLinejoin="round" strokeWidth="3.800">
          <path d="M3 9C2 11 2 12 2 15v23c0 8 6 12 13 8l24-13c7-4 7-11 0-15L18 4c-4-2-7 0-7 4v27c0 4 2 5 5 3" />
        </g>
        <path d="M18 20v11l9-5.500z" fill="currentColor" />
        <path d="M30.500 20v11" stroke="currentColor" strokeWidth="2" />
      </svg>
      <div className="flex flex-col">
        <p className="flex gap-[6px] text-[32px] leading-9 font-bold">
          <span>溜</span><span>溜</span><span>自</span><span>学</span>
        </p>
        <p className="font-['DejaVu_Sans',sans-serif] text-[17px] leading-5 font-light">zixue.3D66.COM</p>
      </div>
    </div>
  );
}

export default function App() {
  return (
    <div className="relative flex h-screen flex-col overflow-hidden bg-[#595959] font-['Noto_Sans','Noto_Sans_CJK_SC',sans-serif]">
      <Header />
      <FileTabs />
      <Toolbars />
      <Workspace />
      <CommandLine />
      <VideoMark />
      <StudyMark />
    </div>
  );
}
